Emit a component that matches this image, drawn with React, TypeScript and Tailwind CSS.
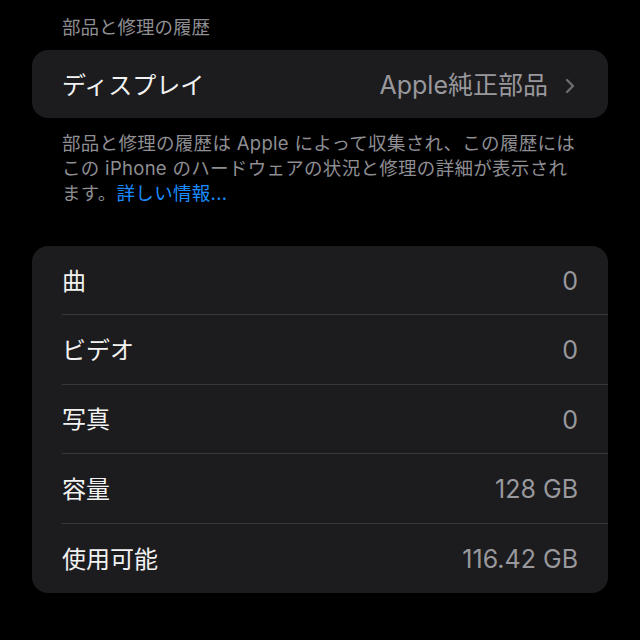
import React from "react";

const font = { fontFamily: 'Inter, "Noto Sans CJK JP", sans-serif' };

function Chevron() {
  return (
    <svg width="12" height="18" viewBox="0 0 12 18" className="ml-[16px]">
      <path d="M3 3 L9 9 L3 15" fill="none" stroke="#6c6c71" strokeWidth="2.4" strokeLinecap="round" strokeLinejoin="round" />
    </svg>
  );
}

const rows: [string, string][] = [
  ["曲", "0"],
  ["ビデオ", "0"],
  ["写真", "0"],
  ["容量", "128 GB"],
  ["使用可能", "116.42 GB"],
];

export default function App() {
  return (
    <div className="w-[640px] h-[640px] bg-black overflow-hidden px-[32px] pt-[15px]" style={font}>
      <div className="pl-[30px] text-[18.5px] leading-[24px] text-[#8e8e93]">部品と修理の履歴</div>
      <div className="mt-[11px] h-[68px] rounded-[16px] bg-[#1c1c1e] pl-[30px] pr-[32px] flex items-center justify-between">
        <span className="text-[24px] text-[#f2f2f2] pt-[3px]">ディスプレイ</span>
        <span className="flex items-center text-[25px] text-[#98989d] pt-[3px]">
          Apple純正部品
          <Chevron />
        </span>
      </div>
      <div className="mt-[13px] pl-[30px] text-[18.5px] leading-[25px] tracking-[0.3px] text-[#8e8e93]">
        <div>部品と修理の履歴は Apple によって収集され、この履歴には</div>
        <div>この iPhone のハードウェアの状況と修理の詳細が表示され</div>
        <div>
          ます。<span className="text-[#1a8cff]">詳しい情報...</span>
        </div>
      </div>
      <div className="mt-[40px] rounded-[16px] bg-[#1c1c1e] pl-[30px] overflow-hidden">
        {rows.map(([k, v], i) => (
          <div
            key={k}
            className={
              "h-[69.4px] flex items-center justify-between pr-[30px] pt-[3px] " +
              (i < rows.length - 1 ? "border-b border-[#38383a]" : "")
            }
          >
            <span className="text-[24px] text-[#f2f2f2]">{k}</span>
            <span className="text-[25px] text-[#98989d]">{v}</span>
          </div>
        ))}
      </div>
    </div>
  );
}
